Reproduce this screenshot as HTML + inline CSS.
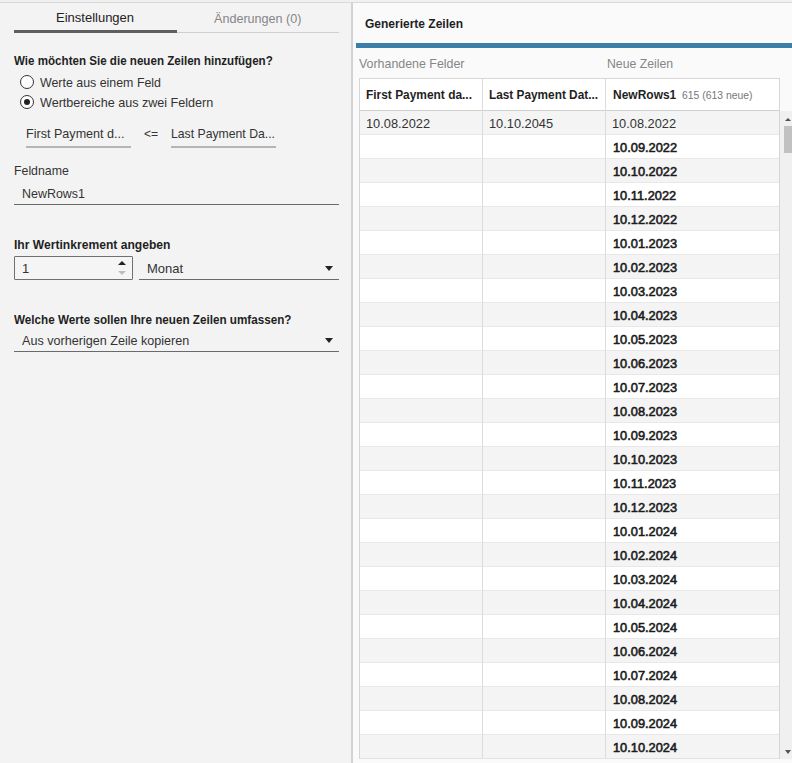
<!DOCTYPE html>
<html><head><meta charset="utf-8"><title>Neue Zeilen</title>
<style>
html,body{margin:0;padding:0;}
body{width:792px;height:763px;overflow:hidden;background:#f0f0f0;position:relative;font-family:"Liberation Sans",sans-serif;font-size:13px;color:#333;}
.abs{position:absolute;}
.tx{position:absolute;white-space:nowrap;line-height:16px;transform-origin:0 50%;}
.topline{left:0;top:2px;width:792px;height:1px;background:#d9d9d9;}
.left{left:0;top:3px;width:351px;height:760px;background:#f3f3f3;}
.divider{left:351px;top:3px;width:2px;height:760px;background:#d2d2d2;}
.right{left:353px;top:3px;width:439px;height:760px;background:#fafafa;}
.bluebar{left:356px;top:43px;width:436px;height:5px;background:#3b7ea7;}
.tabline{left:14px;top:32px;width:325px;height:1px;background:#d0d0d0;}
.tabsel{left:14px;top:30px;width:163px;height:3px;background:#5e5e5e;}
.radio{width:12px;height:12px;border:1px solid #333;border-radius:50%;background:#fff;}
.dot{width:6px;height:6px;border-radius:50%;background:#222;left:3px;top:3px;}
.uline{height:1px;background:#6a6a6a;}
.uline2{height:2px;background:#b3b6b9;}
.tri{width:0;height:0;border-left:4px solid transparent;border-right:4px solid transparent;}
.table{left:359px;top:78px;width:421px;height:681px;background:#fff;box-sizing:border-box;}
.frame{left:359px;top:78px;width:421px;height:681px;border:1px solid #d6d6d6;border-bottom-color:#e2e2e2;box-sizing:border-box;}
.r{position:absolute;left:360px;width:419px;height:23px;background:#fff;border-bottom:1px solid #e8e8e8;}
.r.odd{background:#f4f4f4;}
.t{position:absolute;top:5px;line-height:16px;white-space:nowrap;color:#333;transform-origin:0 50%;transform:scaleX(0.985);}
.t.b{color:#1c1c1c;-webkit-text-stroke:0.6px #1c1c1c;left:252.6px;}
.c1{left:6px;} .c2{left:129px;} .c3{left:252px;}
.vl{width:1px;background:#dcdcdc;top:79px;height:679px;}
</style></head><body>
<div class="abs left"></div>
<div class="abs divider"></div>
<div class="abs right"></div>
<div class="abs topline"></div>

<div class="abs tabline"></div>
<div class="abs tabsel"></div>
<div class="abs radio" style="left:20px;top:75px;"></div>
<div class="abs radio" style="left:20px;top:95px;"><div class="abs dot"></div></div>
<div class="abs uline2" style="left:26px;top:146px;width:105px;"></div>
<div class="abs uline2" style="left:171px;top:146px;width:105px;"></div>
<div class="abs uline" style="left:14px;top:204px;width:325px;"></div>

<div class="abs" style="left:14px;top:256px;width:119px;height:24px;box-sizing:border-box;border:1px solid #707070;border-radius:1px;background:#f5f5f5;"></div>
<div class="abs tri" style="left:118px;top:261px;border-bottom:4.5px solid #222;"></div>
<div class="abs tri" style="left:118px;top:271px;border-top:4.5px solid #bdbdbd;"></div>
<div class="abs tri" style="left:325px;top:266px;border-top:5px solid #222;"></div>
<div class="abs uline" style="left:139px;top:279px;width:200px;"></div>
<div class="abs tri" style="left:325px;top:338px;border-top:5px solid #222;"></div>
<div class="abs uline" style="left:14px;top:351px;width:325px;"></div>

<div class="abs bluebar"></div>
<div class="abs table"></div>
<div class="abs" style="left:360px;top:110px;width:419px;height:1px;background:#d0d0d0;"></div>
<div class="r odd" style="top:111px"><span class="t c1">10.08.2022</span><span class="t c2">10.10.2045</span><span class="t c3">10.08.2022</span></div>
<div class="r" style="top:135px"><span class="t c3 b">10.09.2022</span></div>
<div class="r odd" style="top:159px"><span class="t c3 b">10.10.2022</span></div>
<div class="r" style="top:183px"><span class="t c3 b">10.11.2022</span></div>
<div class="r odd" style="top:207px"><span class="t c3 b">10.12.2022</span></div>
<div class="r" style="top:231px"><span class="t c3 b">10.01.2023</span></div>
<div class="r odd" style="top:255px"><span class="t c3 b">10.02.2023</span></div>
<div class="r" style="top:279px"><span class="t c3 b">10.03.2023</span></div>
<div class="r odd" style="top:303px"><span class="t c3 b">10.04.2023</span></div>
<div class="r" style="top:327px"><span class="t c3 b">10.05.2023</span></div>
<div class="r odd" style="top:351px"><span class="t c3 b">10.06.2023</span></div>
<div class="r" style="top:375px"><span class="t c3 b">10.07.2023</span></div>
<div class="r odd" style="top:399px"><span class="t c3 b">10.08.2023</span></div>
<div class="r" style="top:423px"><span class="t c3 b">10.09.2023</span></div>
<div class="r odd" style="top:447px"><span class="t c3 b">10.10.2023</span></div>
<div class="r" style="top:471px"><span class="t c3 b">10.11.2023</span></div>
<div class="r odd" style="top:495px"><span class="t c3 b">10.12.2023</span></div>
<div class="r" style="top:519px"><span class="t c3 b">10.01.2024</span></div>
<div class="r odd" style="top:543px"><span class="t c3 b">10.02.2024</span></div>
<div class="r" style="top:567px"><span class="t c3 b">10.03.2024</span></div>
<div class="r odd" style="top:591px"><span class="t c3 b">10.04.2024</span></div>
<div class="r" style="top:615px"><span class="t c3 b">10.05.2024</span></div>
<div class="r odd" style="top:639px"><span class="t c3 b">10.06.2024</span></div>
<div class="r" style="top:663px"><span class="t c3 b">10.07.2024</span></div>
<div class="r odd" style="top:687px"><span class="t c3 b">10.08.2024</span></div>
<div class="r" style="top:711px"><span class="t c3 b">10.09.2024</span></div>
<div class="r odd" style="top:735px"><span class="t c3 b">10.10.2024</span></div>

<div class="abs vl" style="left:482px;"></div>
<div class="abs vl" style="left:605px;"></div>
<div class="abs frame"></div>
<div class="tx" style="left:56px;top:10px;color:#222;">Einstellungen</div>
<div class="tx" style="left:214px;top:11px;color:#868686;transform:scaleX(0.9685);">Änderungen (0)</div>
<div class="tx" style="left:14px;top:53px;color:#1f1f1f;font-weight:bold;transform:scaleX(0.8916);">Wie möchten Sie die neuen Zeilen hinzufügen?</div>
<div class="tx" style="left:40px;top:75px;color:#333;transform:scaleX(0.9532);">Werte aus einem Feld</div>
<div class="tx" style="left:40px;top:95px;color:#333;transform:scaleX(0.9684);">Wertbereiche aus zwei Feldern</div>
<div class="tx" style="left:26px;top:126px;color:#333;transform:scaleX(0.9679);">First Payment d...</div>
<div class="tx" style="left:144px;top:126px;color:#333;transform:scaleX(0.9350);">&lt;=</div>
<div class="tx" style="left:171px;top:126px;color:#333;transform:scaleX(0.9406);">Last Payment Da...</div>
<div class="tx" style="left:14px;top:163px;color:#333;transform:scaleX(0.9479);">Feldname</div>
<div class="tx" style="left:22px;top:186px;color:#333;transform:scaleX(0.9582);">NewRows1</div>
<div class="tx" style="left:14px;top:237px;color:#1f1f1f;font-weight:bold;transform:scaleX(0.9311);">Ihr Wertinkrement angeben</div>
<div class="tx" style="left:22px;top:261px;color:#333;">1</div>
<div class="tx" style="left:147px;top:261px;color:#333;">Monat</div>
<div class="tx" style="left:14px;top:312px;color:#1f1f1f;font-weight:bold;transform:scaleX(0.8989);">Welche Werte sollen Ihre neuen Zeilen umfassen?</div>
<div class="tx" style="left:22px;top:333px;color:#333;transform:scaleX(0.9686);">Aus vorherigen Zeile kopieren</div>
<div class="tx" style="left:365px;top:16px;color:#1f1f1f;font-weight:bold;transform:scaleX(0.9226);">Generierte Zeilen</div>
<div class="tx" style="left:359px;top:56px;color:#868686;transform:scaleX(0.9539);">Vorhandene Felder</div>
<div class="tx" style="left:606.5px;top:56px;color:#868686;transform:scaleX(0.9414);">Neue Zeilen</div>
<div class="tx" style="left:366px;top:87px;color:#1f1f1f;font-weight:bold;transform:scaleX(0.9170);">First Payment da...</div>
<div class="tx" style="left:489px;top:87px;color:#1f1f1f;font-weight:bold;transform:scaleX(0.9088);">Last Payment Dat...</div>
<div class="tx" style="left:612.5px;top:87px;color:#1f1f1f;font-weight:bold;transform:scaleX(0.9222);">NewRows1</div>
<div class="tx" style="left:682px;top:87px;color:#777;font-size:10.5px;transform:scaleX(0.9897);">615 (613 neue)</div>

<!-- scrollbar -->
<div class="abs" style="left:780px;top:111px;width:12px;height:648px;background:#f0f0f0;"></div>
<div class="abs" style="left:784px;top:126px;width:8px;height:27px;background:#c1c1c1;"></div>
<div class="abs tri" style="left:784.7px;top:117.5px;border-left-width:3.5px;border-right-width:3.5px;border-bottom:3.5px solid #505050;"></div>
<div class="abs tri" style="left:785px;top:750px;border-left-width:3.5px;border-right-width:3.5px;border-top:4px solid #555;"></div>
</body></html>
